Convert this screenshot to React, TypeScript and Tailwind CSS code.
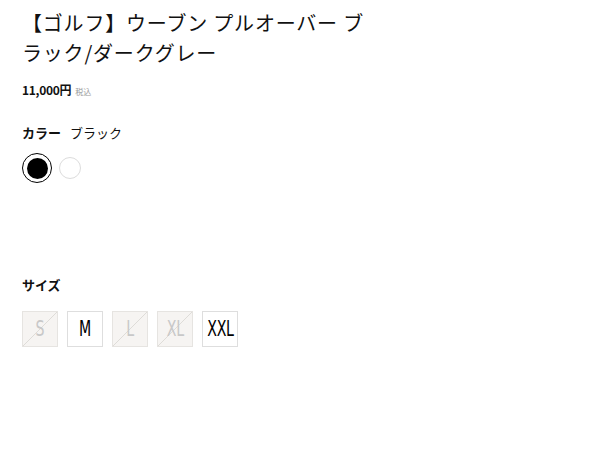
const sizes = [
  { label: "S", stock: false },
  { label: "M", stock: true },
  { label: "L", stock: false },
  { label: "XL", stock: false },
  { label: "XXL", stock: true },
];

export default function App() {
  return (
    <div className="min-h-[450px] w-[600px] bg-white pl-[22px] pt-[8px] text-[#111] font-['Noto_Sans_CJK_JP','Noto_Sans',sans-serif]">
      <h1 className="w-[348px] text-[20px] leading-[30px] font-normal tracking-[0.8px]">
        【ゴルフ】ウーブン プルオーバー ブラック/ダークグレー
      </h1>

      <div className="mt-[14px] flex items-baseline gap-[4px] leading-[16px]">
        <span className="text-[12px] font-bold tracking-[-0.3px]">11,000円</span>
        <span className="text-[8px] text-[#999]">税込</span>
      </div>

      <div className="mt-[24px] flex gap-[9px] text-[13px] leading-[18px]">
        <span className="font-bold">カラー</span>
        <span>ブラック</span>
      </div>

      <div className="mt-[11px] flex items-center gap-[7px]">
        <button className="flex h-[30px] w-[30px] items-center justify-center rounded-full border-[1.5px] border-black bg-white">
          <span className="block h-[21px] w-[21px] rounded-full bg-black" />
        </button>
        <button className="h-[22px] w-[22px] rounded-full border border-[#dcdcdc] bg-white" />
      </div>

      <div className="mt-[93px] text-[13px] font-bold leading-[18px]">サイズ</div>

      <div className="mt-[17px] flex gap-[9px]">
        {sizes.map((s) => (
          <div
            key={s.label}
            className={
              s.stock
                ? "relative flex h-[36px] w-[36px] items-center justify-center border border-[#dedede] bg-white text-black"
                : "relative flex h-[36px] w-[36px] items-center justify-center border border-[#e6e4e1] bg-[#f6f4f2] text-[#c8c8c8]"
            }
          >
            {!s.stock && (
              <svg className="absolute inset-0 h-full w-full" viewBox="0 0 36 36" preserveAspectRatio="none">
                <line x1="0" y1="36" x2="36" y2="0" stroke="#dcdad6" strokeWidth="1" />
              </svg>
            )}
            <span className="relative text-[21px] leading-none tracking-[-0.5px] font-['Liberation_Sans_Narrow','DejaVu_Sans_Condensed',sans-serif] scale-x-[0.75]">
              {s.label}
            </span>
          </div>
        ))}
      </div>
    </div>
  );
}
